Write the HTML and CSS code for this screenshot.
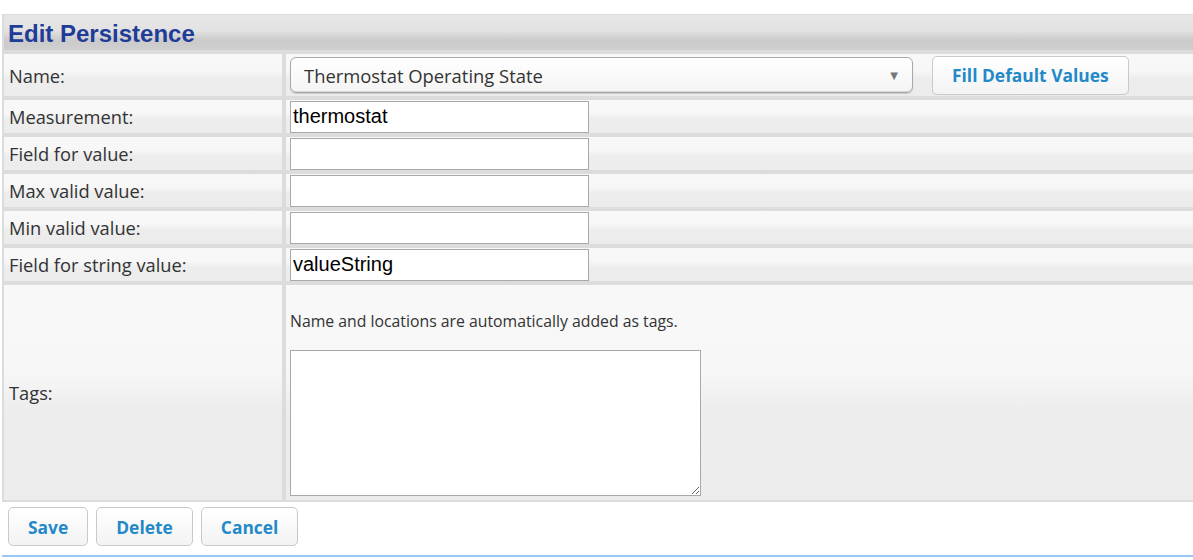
FILE: index.html
```html
<!DOCTYPE html>
<html>
<head>
<meta charset="utf-8">
<link rel="stylesheet" href="styles.css">
</head>
<body>
<div class="panel">
  <div class="form">
    <div class="title">Edit Persistence</div>

    <div class="label">Name:</div>
    <div class="value value-name">
      <div class="select">
        <span class="select-text">Thermostat Operating State</span>
        <span class="select-arrow">&#9660;</span>
      </div>
      <button class="btn btn-fill">Fill Default Values</button>
    </div>

    <div class="label">Measurement:</div>
    <div class="value"><input class="field" type="text" value="thermostat"></div>

    <div class="label">Field for value:</div>
    <div class="value"><input class="field" type="text" value=""></div>

    <div class="label">Max valid value:</div>
    <div class="value"><input class="field" type="text" value=""></div>

    <div class="label">Min valid value:</div>
    <div class="value"><input class="field" type="text" value=""></div>

    <div class="label">Field for string value:</div>
    <div class="value"><input class="field" type="text" value="valueString"></div>

    <div class="label label-tags">Tags:</div>
    <div class="value value-tags">
      <p class="hint">Name and locations are automatically added as tags.</p>
      <textarea class="tags"></textarea>
    </div>
  </div>

  <div class="actions">
    <button class="btn">Save</button>
    <button class="btn">Delete</button>
    <button class="btn">Cancel</button>
  </div>
  <div class="rule"></div>
</div>
</body>
</html>
```

FILE: styles.css
```css
html, body {
  margin: 0;
  padding: 0;
  background: #ffffff;
  overflow: hidden;
}

body {
  font-family: "Open Sans", "DejaVu Sans", sans-serif;
  color: #333333;
}

.panel {
  width: 1200px;
  padding-top: 14px;
}

.form {
  margin-left: 2px;
  display: grid;
  grid-template-columns: 278px 1fr;
  grid-template-rows: 35px 42px 33px 33px 33px 33px 33px 215px;
  gap: 4px;
  padding: 1px 0 2px 2px;
  background: #dcdcdc;
}

.title {
  grid-column: 1 / 3;
  display: flex;
  align-items: center;
  padding: 2px 0 0 4px;
  font-family: "Liberation Sans", Arial, sans-serif;
  font-weight: bold;
  font-size: 24px;
  color: #1f3c98;
  background: linear-gradient(#e7e7e7 0%, #e2e2e2 45%, #cbcbcb 72%, #cfcfcf 100%);
}

.label,
.value {
  background: linear-gradient(#f8f8f8 0%, #f7f7f7 40%, #ededed 58%, #ececec 100%);
}

.label {
  display: flex;
  align-items: center;
  padding-left: 5px;
  font-size: 18.3px;
  color: #333333;
}

.value {
  display: flex;
  align-items: center;
  padding-left: 4px;
}

.value-name {
  gap: 19px;
}

.select {
  box-sizing: border-box;
  width: 623px;
  height: 36px;
  display: flex;
  align-items: center;
  justify-content: space-between;
  padding: 0 14px 0 13px;
  border: 1px solid #a8a8a8;
  border-radius: 6px;
  box-shadow: inset 0 -1px 0 #d8d8d8, 0 1px 1px rgba(0,0,0,0.15);
  background: linear-gradient(#ffffff, #f4f4f4);
  font-size: 18.4px;
  color: #333333;
}

.select-arrow {
  font-size: 10px;
  color: #777777;
}

.btn {
  box-sizing: border-box;
  height: 39px;
  padding: 0 19px;
  border: 1px solid #c9c9c9;
  border-radius: 5px;
  background: linear-gradient(#ffffff, #f3f3f3);
  font-family: "Open Sans", "DejaVu Sans", sans-serif;
  font-weight: 700;
  font-size: 17.4px;
  color: #2389c9;
}

.field {
  box-sizing: border-box;
  width: 299px;
  height: 32px;
  margin: 0;
  padding: 0 2px;
  border: 1px solid #a9a9a9;
  background: #ffffff;
  font-family: "Liberation Sans", Arial, sans-serif;
  font-size: 20px;
  color: #000000;
  outline: none;
}

.value-tags {
  flex-direction: column;
  align-items: flex-start;
  justify-content: flex-start;
}

.hint {
  margin: 26px 0 0 0;
  height: 20px;
  line-height: 20px;
  font-size: 15.8px;
  color: #333333;
}

.tags {
  box-sizing: border-box;
  width: 411px;
  height: 146px;
  margin: 19px 0 0 0;
  border: 1px solid #a9a9a9;
  background: #ffffff;
  resize: both;
  outline: none;
}

.actions {
  display: flex;
  gap: 8px;
  padding: 5px 0 0 8px;
}

.rule {
  margin: 9px 0 0 2px;
  height: 2px;
  background: #99c8f7;
}
```
